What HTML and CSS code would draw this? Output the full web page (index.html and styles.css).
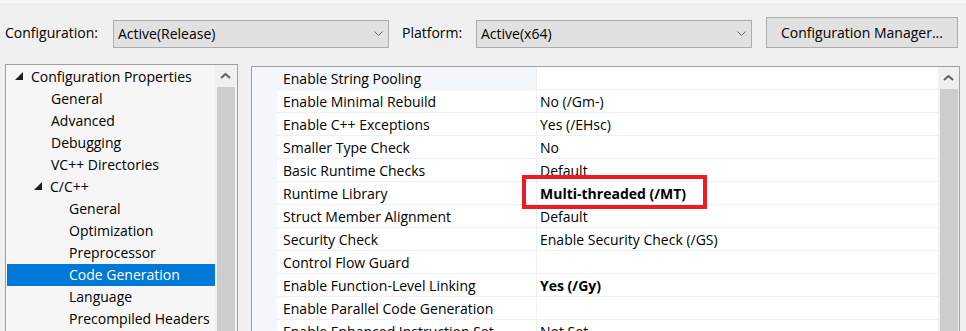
FILE: index.html
```html
<!DOCTYPE html>
<html lang="en">
<head>
  <meta charset="UTF-8">
  <title>Code Generation Property Pages</title>
  <link rel="stylesheet" href="styles.css">
</head>
<body>
  <div class="toolbar">
    <label class="lbl lbl-config">Configuration:</label>
    <div class="combo">
      <span>Active(Release)</span>
      <svg class="chev" width="9" height="5" viewBox="0 0 9 5"><path d="M0.5 0.5 L4.5 4.5 L8.5 0.5" fill="none" stroke="#5f5f5f" stroke-width="1"/></svg>
    </div>
    <label class="lbl lbl-platform">Platform:</label>
    <div class="combo">
      <span>Active(x64)</span>
      <svg class="chev" width="9" height="5" viewBox="0 0 9 5"><path d="M0.5 0.5 L4.5 4.5 L8.5 0.5" fill="none" stroke="#5f5f5f" stroke-width="1"/></svg>
    </div>
    <button class="btn">Configuration Manager...</button>
  </div>

  <div class="main">
    <div class="panel tree-panel">
      <ul class="tree">
        <li class="lv0"><svg class="tri" width="8" height="8" viewBox="0 0 8 8"><path d="M8 0 L8 8 L0 8 Z" fill="#1e1e1e"/></svg>Configuration Properties</li>
        <li class="lv1">General</li>
        <li class="lv1">Advanced</li>
        <li class="lv1">Debugging</li>
        <li class="lv1">VC++ Directories</li>
        <li class="lv1 open"><svg class="tri" width="8" height="8" viewBox="0 0 8 8"><path d="M8 0 L8 8 L0 8 Z" fill="#1e1e1e"/></svg>C/C++</li>
        <li class="lv2">General</li>
        <li class="lv2">Optimization</li>
        <li class="lv2">Preprocessor</li>
        <li class="lv2 selected">Code Generation</li>
        <li class="lv2">Language</li>
        <li class="lv2">Precompiled Headers</li>
      </ul>
      <div class="vscroll">
        <div class="arrow"><svg width="11" height="6" viewBox="0 0 11 6"><path d="M1 5 L5.5 1 L10 5" fill="none" stroke="#606060" stroke-width="2"/></svg></div>
        <div class="thumb"></div>
      </div>
    </div>

    <div class="panel grid-panel">
      <div class="grid">
        <div class="row hover"><div class="gutter"></div><div class="name">Enable String Pooling</div><div class="value"></div></div>
        <div class="row"><div class="gutter"></div><div class="name">Enable Minimal Rebuild</div><div class="value">No (/Gm-)</div></div>
        <div class="row"><div class="gutter"></div><div class="name">Enable C++ Exceptions</div><div class="value">Yes (/EHsc)</div></div>
        <div class="row"><div class="gutter"></div><div class="name">Smaller Type Check</div><div class="value">No</div></div>
        <div class="row"><div class="gutter"></div><div class="name">Basic Runtime Checks</div><div class="value">Default</div></div>
        <div class="row"><div class="gutter"></div><div class="name">Runtime Library</div><div class="value bold">Multi-threaded (/MT)</div></div>
        <div class="row"><div class="gutter"></div><div class="name">Struct Member Alignment</div><div class="value">Default</div></div>
        <div class="row"><div class="gutter"></div><div class="name">Security Check</div><div class="value">Enable Security Check (/GS)</div></div>
        <div class="row"><div class="gutter"></div><div class="name">Control Flow Guard</div><div class="value"></div></div>
        <div class="row"><div class="gutter"></div><div class="name">Enable Function-Level Linking</div><div class="value bold">Yes (/Gy)</div></div>
        <div class="row"><div class="gutter"></div><div class="name">Enable Parallel Code Generation</div><div class="value"></div></div>
        <div class="row"><div class="gutter"></div><div class="name">Enable Enhanced Instruction Set</div><div class="value">Not Set</div></div>
      </div>
      <div class="vscroll">
        <div class="arrow"><svg width="11" height="6" viewBox="0 0 11 6"><path d="M1 5 L5.5 1 L10 5" fill="none" stroke="#606060" stroke-width="2"/></svg></div>
        <div class="thumb"></div>
      </div>
      <!-- annotation drawn over the Runtime Library value -->
      <div class="mark"></div>
    </div>
  </div>
</body>
</html>
```

FILE: styles.css
```css
html, body { height: 100%; }
body { margin: 0; background: #f0f0f0; font-family: 'Open Sans', 'Noto Sans', sans-serif; font-size: 14px; color: #000; overflow: hidden; border-top: 3px solid #f7f7f7; }

/* top bar */
.toolbar { display: flex; align-items: center; height: 31px; padding: 14px 0 0 5px; }
.lbl { flex: none; white-space: nowrap; }
.lbl-config { width: 108px; }
.lbl-platform { width: 74px; margin-left: 13px; }
.combo { flex: none; box-sizing: border-box; width: 276px; height: 28px; margin-top: 2px; display: flex; align-items: center; justify-content: space-between; padding: 0 5px 0 4px; background: #e1e1e1; border: 1px solid #adadad; }
.btn { flex: none; box-sizing: border-box; width: 192px; height: 31px; margin-left: 14px; background: #e1e1e1; border: 1px solid #adadad; font: inherit; color: #000; padding: 0; }

/* panels */
.main { display: flex; gap: 13px; padding-left: 5px; margin-top: 16px; }
.panel { box-sizing: border-box; display: flex; height: 300px; border: 1px solid #a0a0a0; position: relative; }
.tree-panel { width: 233px; background: #f6f6f6; }
.grid-panel { width: 709px; margin-top: 2px; background: #fff; }

.tree { list-style: none; margin: 1px 0 0 1px; padding: 0; flex: 1; }
.tree li { height: 22px; line-height: 22px; white-space: nowrap; display: flex; align-items: center; }
.tree .lv0 { padding-left: 8px; }
.tree .lv1 { padding-left: 44px; }
.tree .lv1.open { padding-left: 27px; }
.tree .lv2 { padding-left: 62px; }
.tree .tri { flex: none; margin: 0 8px 2px 0; }
.tree .selected { background: #0078d7; color: #fff; }

.vscroll { flex: none; width: 21px; background: #f0f0f0; display: flex; flex-direction: column; align-items: center; }
.tree-panel .vscroll { margin-right: 1px; }
.vscroll .arrow { height: 22px; display: flex; align-items: center; justify-content: center; width: 100%; }
.vscroll .thumb { width: 18px; flex: 1; background: #cdcdcd; }

/* property grid */
.grid { flex: 1; }
.row { display: flex; height: 23px; }
.row .gutter { flex: none; width: 25px; background: #f4f7fc; }
.row .name, .row .value { box-sizing: border-box; height: 23px; padding-top: 1px; line-height: 21px; border-bottom: 1px solid #f0f0f2; white-space: nowrap; }
.row .name { flex: none; width: 260px; padding-left: 6px; border-right: 1px solid #f0f0f2; }
.row .value { flex: 1; padding-left: 3px; }
.row.hover .name { background: #f4f7fc; }
.bold { font-weight: bold; }

.mark { position: absolute; left: 270px; top: 108px; width: 177px; height: 26px; border: 4px solid #ed1c24; }
```
